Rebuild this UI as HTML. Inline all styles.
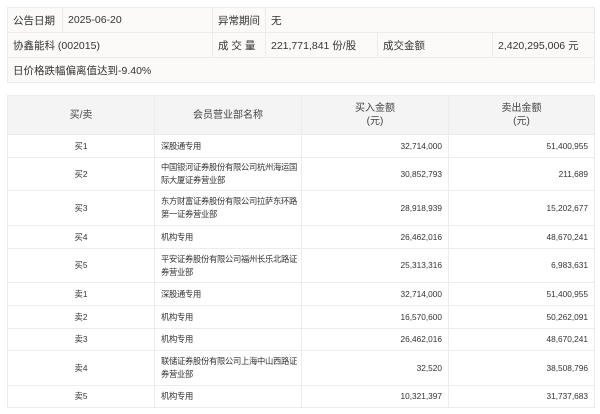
<!DOCTYPE html><html><head><meta charset="utf-8"><style>
body{margin:0;background:#fff;font-family:"Liberation Sans","Noto Sans CJK SC",sans-serif;color:#333;}
table{border-collapse:collapse;position:absolute;left:7px;width:588px;table-layout:fixed}
td{border:1px solid #ececec;box-sizing:border-box}
#t1{top:7px;background:#fbfaf9;font-size:10.5px}
#t1 td{height:25px;padding:0 5px;white-space:nowrap;overflow:hidden}
#t2{top:95px;font-size:8.3px}
#t2 td{padding:0 0 0 6px}
#t2 td.n{letter-spacing:-0.3px}
#t2 th{background:#f4f4f4;font-weight:normal;font-size:10px;border:1px solid #ececec;height:38px;line-height:13px;color:#444;padding:0}
#t2 td.c{text-align:center;padding:0}#t2 td.r{text-align:right;padding:0 6px 0 0}
#t2 td{line-height:13px}
</style></head><body>
<table id="t1"><colgroup><col style="width:55px"><col style="width:150px"><col style="width:53px"><col style="width:112px"><col style="width:115px"><col></colgroup>
<tr><td>公告日期</td><td>2025-06-20</td><td>异常期间</td><td colspan="3">无</td></tr>
<tr><td colspan="2">协鑫能科 (002015)</td><td>成 交 量</td><td>221,771,841 份/股</td><td>成交金额</td><td>2,420,295,006 元</td></tr>
<tr><td colspan="6">日价格跌幅偏离值达到-9.40%</td></tr>
</table>
<table id="t2"><colgroup><col style="width:147px"><col style="width:147px"><col style="width:147px"><col></colgroup>
<tr><th>买/卖</th><th>会员营业部名称</th><th>买入金额<br>(元)</th><th>卖出金额<br>(元)</th></tr>
<tr style="height:23px"><td class="c">买1</td><td class="n">深股通专用</td><td class="r">32,714,000</td><td class="r">51,400,955</td></tr>
<tr style="height:33px"><td class="c">买2</td><td class="n">中国银河证券股份有限公司杭州海运国际大厦证券营业部</td><td class="r">30,852,793</td><td class="r">211,689</td></tr>
<tr style="height:35px"><td class="c">买3</td><td class="n">东方财富证券股份有限公司拉萨东环路第一证券营业部</td><td class="r">28,918,939</td><td class="r">15,202,677</td></tr>
<tr style="height:23px"><td class="c">买4</td><td class="n">机构专用</td><td class="r">26,462,016</td><td class="r">48,670,241</td></tr>
<tr style="height:34px"><td class="c">买5</td><td class="n">平安证券股份有限公司福州长乐北路证券营业部</td><td class="r">25,313,316</td><td class="r">6,983,631</td></tr>
<tr style="height:23px"><td class="c">卖1</td><td class="n">深股通专用</td><td class="r">32,714,000</td><td class="r">51,400,955</td></tr>
<tr style="height:23px"><td class="c">卖2</td><td class="n">机构专用</td><td class="r">16,570,600</td><td class="r">50,262,091</td></tr>
<tr style="height:22px"><td class="c">卖3</td><td class="n">机构专用</td><td class="r">26,462,016</td><td class="r">48,670,241</td></tr>
<tr style="height:35px"><td class="c">卖4</td><td class="n">联储证券股份有限公司上海中山西路证券营业部</td><td class="r">32,520</td><td class="r">38,508,796</td></tr>
<tr style="height:22px"><td class="c">卖5</td><td class="n">机构专用</td><td class="r">10,321,397</td><td class="r">31,737,683</td></tr>
</table>
</body></html>
